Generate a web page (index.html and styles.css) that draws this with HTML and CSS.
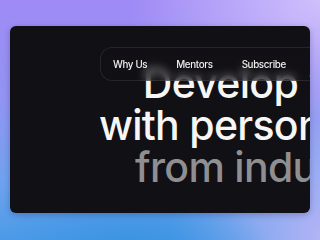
FILE: index.html
```html
<!DOCTYPE html>
<html>
<head>
<meta charset="utf-8">
<link rel="stylesheet" href="styles.css">
</head>
<body>
<div class="stage">
  <div class="card">
    <div class="site">
      <h1 class="headline">
        <span class="line">Develop your career.</span>
        <span class="line">with personal mentorship</span>
        <span class="line muted">from industry experts</span>
      </h1>
    </div>
    <nav class="nav">
      <a class="nav-link">Why Us</a>
      <a class="nav-link">Mentors</a>
      <a class="nav-link">Subscribe</a>
    </nav>
  </div>
</div>
</body>
</html>
```

FILE: styles.css
```css
html, body {
  margin: 0;
  padding: 0;
}
body {
  width: 320px;
  height: 240px;
  overflow: hidden;
  font-family: Inter, "Noto Sans", sans-serif;
  background:
    radial-gradient(ellipse 140px 60px at 130px 250px, #3a93e2 0%, rgba(58,147,226,0) 100%),
    radial-gradient(ellipse 200px 120px at 330px 0px, #d2c2fc 0%, rgba(210,194,252,0) 100%),
    radial-gradient(ellipse 160px 160px at 330px 240px, #bab5f6 0%, rgba(186,181,246,0) 100%),
    linear-gradient(180deg, #9f8af6 0%, #9394f1 40%, #6fa2ee 75%, #4c9be8 100%);
}
.stage {
  padding: 26px 10px 27px 10px;
  height: 187px;
}
.card {
  position: relative;
  height: 187px;
  background: #111014;
  border-radius: 6px;
  overflow: hidden;
  box-shadow: 0 2px 6px rgba(20, 10, 60, 0.25);
}
.site {
  width: 658px;
  display: flex;
  flex-direction: column;
  align-items: center;
}
.headline {
  margin: 0;
  padding-top: 36px;
  font-size: 41px;
  font-weight: 500;
  line-height: 42px;
  letter-spacing: -0.7px;
  color: #f6f6f6;
  text-align: center;
  display: flex;
  flex-direction: column;
  align-items: center;
  white-space: nowrap;
}
.line.muted {
  color: #8f8f92;
}
.nav {
  position: absolute;
  left: 90px;
  top: 21px;
  width: 320px;
  height: 32px;
  display: flex;
  align-items: center;
  gap: 29px;
  padding-left: 12px;
  border: 1px solid rgba(255, 255, 255, 0.09);
  border-radius: 12px;
  background: rgba(18, 17, 21, 0.55);
  backdrop-filter: blur(4px);
  -webkit-backdrop-filter: blur(4px);
}
.nav-link {
  font-size: 9.8px;
  font-weight: 500;
  letter-spacing: -0.35px;
  color: #efefef;
  white-space: nowrap;
}
```
